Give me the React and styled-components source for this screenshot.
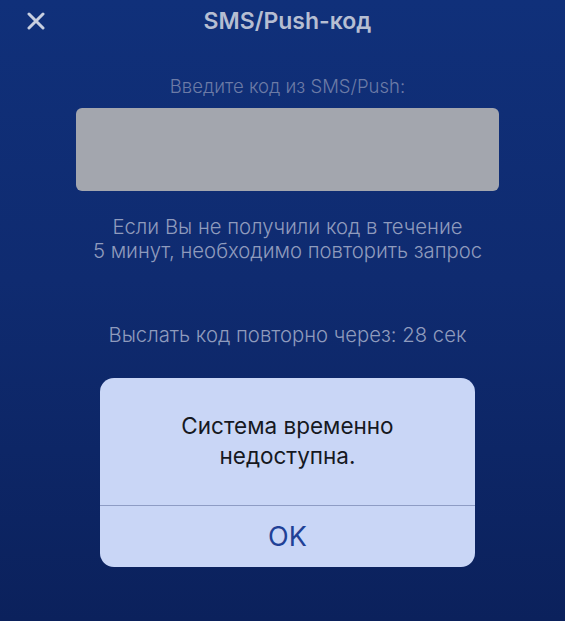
import styled, { createGlobalStyle } from 'styled-components'

const GlobalStyle = createGlobalStyle`
  html, body {
    margin: 0;
    padding: 0;
    background: #0c2360;
  }
  body {
    font-family: Inter, "Noto Sans", Arial, sans-serif;
  }
`;

// фон экрана с затемнением
const Page = styled.div`
  position: relative;
  min-height: 621px;
  padding-left: 10px;
  box-sizing: border-box;
  background: linear-gradient(180deg, #10307a 0%, #0f2b70 45%, #0b215c 100%);
  overflow: hidden;
`;

const Header = styled.header`
  display: grid;
  grid-template-columns: 1fr auto 1fr;
  align-items: center;
  height: 42px;
  padding: 0 16px;
`;

const CloseButton = styled.button`
  justify-self: start;
  display: flex;
  align-items: center;
  justify-content: center;
  width: 20px;
  height: 20px;
  padding: 0;
  border: none;
  background: none;
  cursor: pointer;
`;

const Title = styled.h1`
  margin: 0;
  font-size: 23px;
  font-weight: 600;
  color: #b6bed2;
`;

const Content = styled.main`
  display: flex;
  flex-direction: column;
  align-items: center;
  padding-top: 32px;
`;

const Label = styled.div`
  font-size: 18.5px;
  font-weight: 300;
  color: #6c7ba6;
  line-height: 24px;
`;

const CodeInput = styled.div`
  width: 423px;
  height: 83px;
  margin-top: 10px;
  border-radius: 6px;
  background: #a3a6ae;
`;

const Info = styled.p`
  margin: ${({ top }) => top}px 0 0;
  font-size: 20.3px;
  font-weight: 300;
  line-height: 24px;
  text-align: center;
  color: #8f9bbd;
`;

const Overlay = styled.div`
  position: absolute;
  top: 378px;
  left: 100px;
`;

const Alert = styled.div`
  width: 375px;
  border-radius: 14px;
  background: #c9d6f6;
  overflow: hidden;
`;

const Message = styled.div`
  height: 127px;
  display: flex;
  align-items: center;
  justify-content: center;
  padding-bottom: 2px;
  box-sizing: border-box;
  font-size: 22.5px;
  line-height: 30px;
  text-align: center;
  color: #16191f;
`;

const AlertButton = styled.button`
  display: block;
  width: 100%;
  height: 62px;
  border: none;
  border-top: 1px solid #8e9cc4;
  background: none;
  font-family: inherit;
  font-size: 27px;
  color: #1f4196;
  padding: 0;
`;

const CloseIcon = () => (
  <svg width="18" height="18" viewBox="0 0 18 18">
    <path d="M2 2 L16 16 M16 2 L2 16" stroke="#c8cfe0" strokeWidth="3" strokeLinecap="round" />
  </svg>
);

export default function App() {
  return (
    <>
      <GlobalStyle />
      <Page>
        <Header>
          <CloseButton aria-label="Закрыть">
            <CloseIcon />
          </CloseButton>
          <Title>SMS/Push-код</Title>
          <span />
        </Header>
        <Content>
          <Label>Введите код из SMS/Push:</Label>
          <CodeInput />
          <Info top={24}>
            Если Вы не получили код в течение
            <br />
            5 минут, необходимо повторить запрос
          </Info>
          <Info top={60}>Выслать код повторно через: 28 сек</Info>
        </Content>
        <Overlay>
          <Alert>
            <Message>
              Система временно
              <br />
              недоступна.
            </Message>
            <AlertButton>OK</AlertButton>
          </Alert>
        </Overlay>
      </Page>
    </>
  );
}
